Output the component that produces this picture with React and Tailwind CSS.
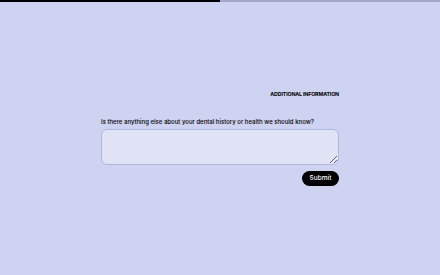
import React from "react";

const App = () => {
  return (
    <div className="min-h-[275px] w-full bg-[#cfd3f2] flex flex-col" style={{ fontFamily: "Inter, 'Noto Sans', sans-serif" }}>
      <div className="flex h-[2px] w-full bg-[#a3a7c8]">
        <div className="w-1/2 bg-black" />
      </div>
      <div className="mx-auto w-[238px] pt-[88px] flex flex-col">
        <div className="text-right text-[5.3px] font-bold tracking-[-0.03em] text-black leading-[8px]">ADDITIONAL INFORMATION</div>
        <label className="mt-[20px] text-[6px] font-medium leading-[8px] text-black">
          Is there anything else about your dental history or health we should know?
        </label>
        <textarea className="mt-[3px] h-[36px] w-full rounded-[6px] border border-[#b3b7da] bg-[#e0e2f6] outline-none" />
        <div className="mt-[6px] flex justify-end">
          <button className="h-[15px] w-[37px] rounded-full bg-black text-[6.5px] font-medium text-white leading-none">Submit</button>
        </div>
      </div>
    </div>
  );
};

export default App;
